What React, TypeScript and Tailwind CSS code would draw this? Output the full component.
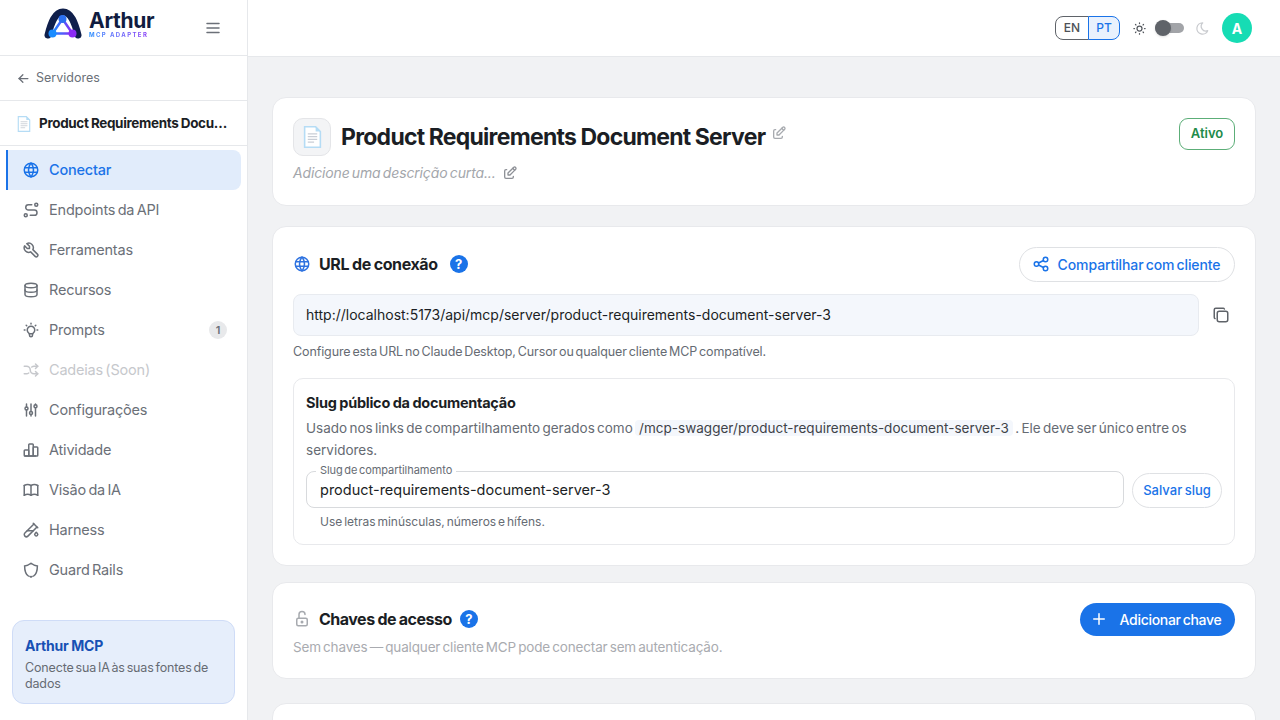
import {
  TbAdjustments,
  TbArrowLeft,
  TbArrowsShuffle,
  TbBook,
  TbBulb,
  TbChartBar,
  TbCopy,
  TbDatabase,
  TbEdit,
  TbLockOpen,
  TbMenu2,
  TbMoon,
  TbPlus,
  TbRoute,
  TbShare,
  TbSun,
  TbTestPipe,
  TbTool,
  TbWorld,
} from 'react-icons/tb';

function GuardIcon({ className }: { className: string }) {
  return (
    <svg viewBox="0 0 24 24" fill="none" stroke="currentColor" strokeWidth="2" strokeLinecap="round" className={className}>
      <path d="M8.500 20C5 17.500 3.500 13 3.500 6.500C7 6.500 9.500 5 12 3C14.500 5 17 6.500 20.500 6.500C20.500 13 19 17.500 15.500 20" />
      <path d="M10.500 20.500L12 21.500L13.500 20.500" />
    </svg>
  );
}

const navItems = [
  { label: 'Conectar', icon: TbWorld, active: true },
  { label: 'Endpoints da API', icon: TbRoute },
  { label: 'Ferramentas', icon: TbTool },
  { label: 'Recursos', icon: TbDatabase },
  { label: 'Prompts', icon: TbBulb, badge: '1' },
  { label: 'Cadeias (Soon)', icon: TbArrowsShuffle, disabled: true },
  { label: 'Configurações', icon: TbAdjustments },
  { label: 'Atividade', icon: TbChartBar },
  { label: 'Visão da IA', icon: TbBook },
  { label: 'Harness', icon: TbTestPipe },
  { label: 'Guard Rails', icon: GuardIcon },
];

function PageIcon({ className }: { className: string }) {
  return (
    <svg viewBox="0 0 24 28" className={className}>
      <path d="M2 1h14l6 6v20H2z" fill="#fff" stroke="#b5dcf5" strokeWidth="2" />
      <path d="M16 1v6h6z" fill="#b5dcf5" />
      <path d="M6 10h12M6 13.500h12M6 17h12M6 20.500h8" stroke="#c9ced6" strokeWidth="1.500" />
    </svg>
  );
}

function Logo() {
  return (
    <svg viewBox="0 0 38 32" className="h-[32px] w-[38px]">
      <defs>
        <linearGradient id="lg" x1="0" y1="0" x2="1" y2="0">
          <stop offset="0" stopColor="#1a8cff" />
          <stop offset="1" stopColor="#8b2cf5" />
        </linearGradient>
      </defs>
      <path
        d="M4 27C7 15 11 4 19 4S31 15 34 27"
        fill="none"
        stroke="#0f1f4b"
        strokeWidth="7"
        strokeLinecap="round"
      />
      <path d="M18.500 11L8.500 25.500h20z" fill="#fff" stroke="url(#lg)" strokeWidth="2.500" />
      <circle cx="18.500" cy="11" r="4" fill="#2b6ff0" />
      <circle cx="8.500" cy="25.500" r="4" fill="#1a8cff" />
      <circle cx="28.500" cy="25.500" r="4" fill="#8b2cf5" />
    </svg>
  );
}

function HelpIcon() {
  return (
    <span className="flex h-[18px] w-[18px] items-center justify-center rounded-full bg-[#1a73e8] text-[13px] leading-none font-bold text-white">
      ?
    </span>
  );
}

export default function App() {
  return (
    <div className="flex h-[720px] w-[1280px] overflow-hidden bg-[#f1f2f4] font-['Inter','Liberation_Sans',sans-serif] text-[#1b1e24] [word-spacing:-1.5px]">
      <aside className="flex w-[248px] shrink-0 flex-col border-r border-[#e6e8eb] bg-white">
        <div className="flex h-[56px] shrink-0 items-center border-b border-[#e6e8eb] pl-[44px] pr-[25px]">
          <div className="-mt-[8px] flex items-center">
            <Logo />
            <div className="ml-[7px] flex flex-col">
              <span className="text-[21px] leading-[21px] font-bold tracking-[-0.3px] text-[#101c40]">Arthur</span>
              <span className="bg-gradient-to-r from-[#1a8cff] to-[#8b2cf5] bg-clip-text text-[6px] leading-[7px] font-bold tracking-[1.4px] text-transparent [word-spacing:0]">
                MCP ADAPTER
              </span>
            </div>
          </div>
          <TbMenu2 className="ml-auto h-[18px] w-[18px] text-[#6b7078]" />
        </div>

        <div className="flex h-[45px] shrink-0 items-center gap-[5px] border-b border-[#e6e8eb] pl-[16px] text-[12.500px] text-[#6b7078]">
          <TbArrowLeft className="h-[15px] w-[15px]" />
          Servidores
        </div>

        <div className="flex h-[45px] shrink-0 items-center gap-[8px] border-b border-[#e6e8eb] pl-[17px] pr-[18px] pt-[1px]">
          <PageIcon className="h-[16px] w-[14px] shrink-0" />
          <span className="truncate text-[13.500px] font-bold tracking-[-0.35px] [word-spacing:-0.5px]">
            Product Requirements Document Server
          </span>
        </div>

        <nav className="flex flex-col px-[6px] pt-[4px]">
          {navItems.map((item) => {
            const Icon = item.icon;
            return (
              <div
                key={item.label}
                className={
                  item.active
                    ? 'flex h-[40px] items-center gap-[9px] rounded-r-[8px] border-l-2 border-[#1a73e8] bg-[#e1ecfb] px-[14px] font-medium text-[#1a73e8]'
                    : item.disabled
                      ? 'flex h-[40px] items-center gap-[9px] border-l-2 border-transparent px-[14px] text-[#c6c8cc]'
                      : 'flex h-[40px] items-center gap-[9px] border-l-2 border-transparent px-[14px] text-[#6b7078]'
                }
              >
                <Icon className="h-[18px] w-[18px] shrink-0" />
                <span className="text-[14.500px] tracking-[-0.2px]">{item.label}</span>
                {item.badge && (
                  <span className="ml-auto flex h-[18px] w-[18px] items-center justify-center rounded-full bg-[#e8e9eb] text-[11px] font-semibold">
                    {item.badge}
                  </span>
                )}
              </div>
            );
          })}
        </nav>

        <div className="mx-[12px] mt-[30px] h-[84px] rounded-[12px] border border-[#cfdcf7] bg-[#e6eefb] px-[12px] pt-[15px]">
          <div className="text-[14px] leading-[20px] font-bold tracking-[-0.2px] text-[#1650b4] [word-spacing:-0.5px]">
            Arthur MCP
          </div>
          <div className="mt-[4px] text-[12.500px] leading-[16px] tracking-[-0.15px] text-[#666b73]">
            Conecte sua IA às suas fontes de dados
          </div>
        </div>
      </aside>

      <div className="flex min-w-0 flex-1 flex-col">
        <header className="flex h-[57px] shrink-0 items-center justify-end border-b border-[#e6e8eb] bg-white pr-[28px]">
          <div className="flex h-[24px] text-[12px] font-medium">
            <span className="flex w-[34px] items-center justify-center rounded-l-[8px] border border-[#5f6369] text-[#4d5157]">
              EN
            </span>
            <span className="-ml-px flex w-[32px] items-center justify-center rounded-r-[8px] border border-[#1a73e8] bg-[#e9f1fd] text-[#1a73e8]">
              PT
            </span>
          </div>
          <TbSun className="ml-[12px] h-[15px] w-[15px] text-[#55595f]" />
          <div className="relative ml-[8px] h-[10px] w-[29px] rounded-full bg-[#a2a4a8]">
            <span className="absolute -top-[3px] left-0 h-[16px] w-[16px] rounded-full bg-[#5f6369] shadow" />
          </div>
          <TbMoon className="ml-[11px] h-[15px] w-[15px] text-[#c9cbcf]" />
          <div className="ml-[12px] flex h-[30px] w-[30px] items-center justify-center rounded-full bg-[#16dcb4] text-[14px] font-bold text-white">
            A
          </div>
        </header>

        <main className="flex-1 overflow-hidden px-[24px] pt-[40px]">
          <section className="flex h-[109px] items-start justify-between rounded-[14px] border border-[#e8e9ec] bg-white px-[20px] pt-[20px]">
            <div>
              <div className="flex items-center gap-[10px]">
                <div className="flex h-[38px] w-[38px] items-center justify-center rounded-[10px] border border-[#e4e5e8] bg-[#f3f4f6]">
                  <PageIcon className="h-[22px] w-[19px]" />
                </div>
                <h1 className="text-[23px] font-bold tracking-[-0.73px] [word-spacing:-0.5px]">
                  Product Requirements Document Server
                </h1>
                <TbEdit className="-mt-[8px] -ml-[4px] h-[16px] w-[16px] text-[#a7aaaf]" />
              </div>
              <div className="mt-[6px] flex items-center gap-[6px] text-[14px] tracking-[-0.15px] text-[#a3a6ab] italic">
                Adicione uma descrição curta...
                <TbEdit className="h-[16px] w-[16px] text-[#8e9197]" />
              </div>
            </div>
            <span className="flex h-[32px] w-[56px] items-center justify-center rounded-[9px] border border-[#5cae78] text-[13px] font-semibold text-[#228b4a]">
              Ativo
            </span>
          </section>

          <section className="mt-[20px] h-[340px] rounded-[14px] border border-[#e8e9ec] bg-white px-[20px] pt-[19px]">
            <div className="flex h-[36px] items-center">
              <TbWorld className="h-[18px] w-[18px] text-[#2f73e0]" />
              <h2 className="ml-[8px] text-[16px] font-bold tracking-[-0.4px] [word-spacing:-0.5px]">URL de conexão</h2>
              <span className="ml-[12px]">
                <HelpIcon />
              </span>
              <button className="ml-auto flex h-[35px] w-[216px] items-center justify-center gap-[8px] rounded-full border border-[#dfe1e4] pr-[2px] text-[14px] font-medium tracking-[-0.1px] text-[#1a73e8] [word-spacing:-1.5px]">
                <TbShare className="h-[18px] w-[18px]" />
                Compartilhar com cliente
              </button>
            </div>

            <div className="mt-[12px] flex items-center">
              <div className="flex h-[42px] flex-1 items-center rounded-[8px] border border-[#e8ebf0] bg-[#f4f7fc] px-[12px] pb-[1px] text-[14px]">
                http://localhost:5173/api/mcp/server/product-requirements-document-server-3
              </div>
              <span className="flex w-[36px] justify-end pr-[5px]">
                <TbCopy className="h-[18px] w-[18px] text-[#5f6369]" />
              </span>
            </div>
            <p className="mt-[8px] text-[12.500px] leading-[16px] tracking-[-0.11px] text-[#666b73]">
              Configure esta URL no Claude Desktop, Cursor ou qualquer cliente MCP compatível.
            </p>

            <div className="mt-[18px] h-[167px] rounded-[10px] border border-[#e8e9ec] px-[12px] pt-[14px]">
              <div className="text-[14.500px] leading-[20px] font-bold tracking-[-0.26px] [word-spacing:-0.5px]">
                Slug público da documentação
              </div>
              <p className="mt-[4px] text-[13.500px] leading-[22px] text-[#666b73]">
                Usado nos links de compartilhamento gerados como{' '}
                <code className="rounded-[4px] bg-[#f4f7fc] px-[4px] font-['Inter',sans-serif] text-[13.500px] tracking-[0.02px] text-[#3f4349]">
                  /mcp-swagger/product-requirements-document-server-3
                </code>{' '}
                . Ele deve ser único entre os servidores.
              </p>
              <div className="mt-[10px] flex items-end gap-[8px]">
                <div className="relative flex h-[37px] flex-1 items-center rounded-[8px] border border-[#d8dadd] px-[13px] text-[14.500px]">
                  <span className="absolute -top-[9px] left-[9px] bg-white px-[4px] text-[11px] leading-[14px] tracking-[-0.05px] text-[#666b73]">
                    Slug de compartilhamento
                  </span>
                  product-requirements-document-server-3
                </div>
                <button className="flex h-[35px] w-[90px] items-center justify-center rounded-full border border-[#dfe1e4] text-[13px] font-medium text-[#1a73e8] [word-spacing:-1px]">
                  Salvar slug
                </button>
              </div>
              <p className="mt-[6px] pl-[14px] text-[12px] leading-[16px] text-[#666b73]">
                Use letras minúsculas, números e hífens.
              </p>
            </div>
          </section>

          <section className="mt-[16px] h-[97px] rounded-[14px] border border-[#e8e9ec] bg-white px-[20px] pt-[20px]">
            <div className="flex h-[32px] items-center">
              <TbLockOpen className="h-[18px] w-[18px] text-[#a7aaaf]" />
              <h2 className="ml-[8px] text-[16px] font-bold tracking-[-0.5px] [word-spacing:-0.5px]">Chaves de acesso</h2>
              <span className="ml-[8px]">
                <HelpIcon />
              </span>
              <button className="ml-auto flex h-[33px] w-[155px] items-center justify-center gap-[12px] rounded-full bg-[#1a73e8] pr-[4px] text-[14px] font-medium tracking-[-0.3px] text-white [word-spacing:-1.5px]">
                <TbPlus className="h-[18px] w-[18px]" />
                Adicionar chave
              </button>
            </div>
            <p className="mt-[3px] text-[13.500px] leading-[18px] tracking-[-0.15px] text-[#a9abb0]">
              Sem chaves — qualquer cliente MCP pode conectar sem autenticação.
            </p>
          </section>

          <section className="mt-[24px] h-[100px] rounded-[14px] border border-[#e8e9ec] bg-white" />
        </main>
      </div>
    </div>
  );
}
